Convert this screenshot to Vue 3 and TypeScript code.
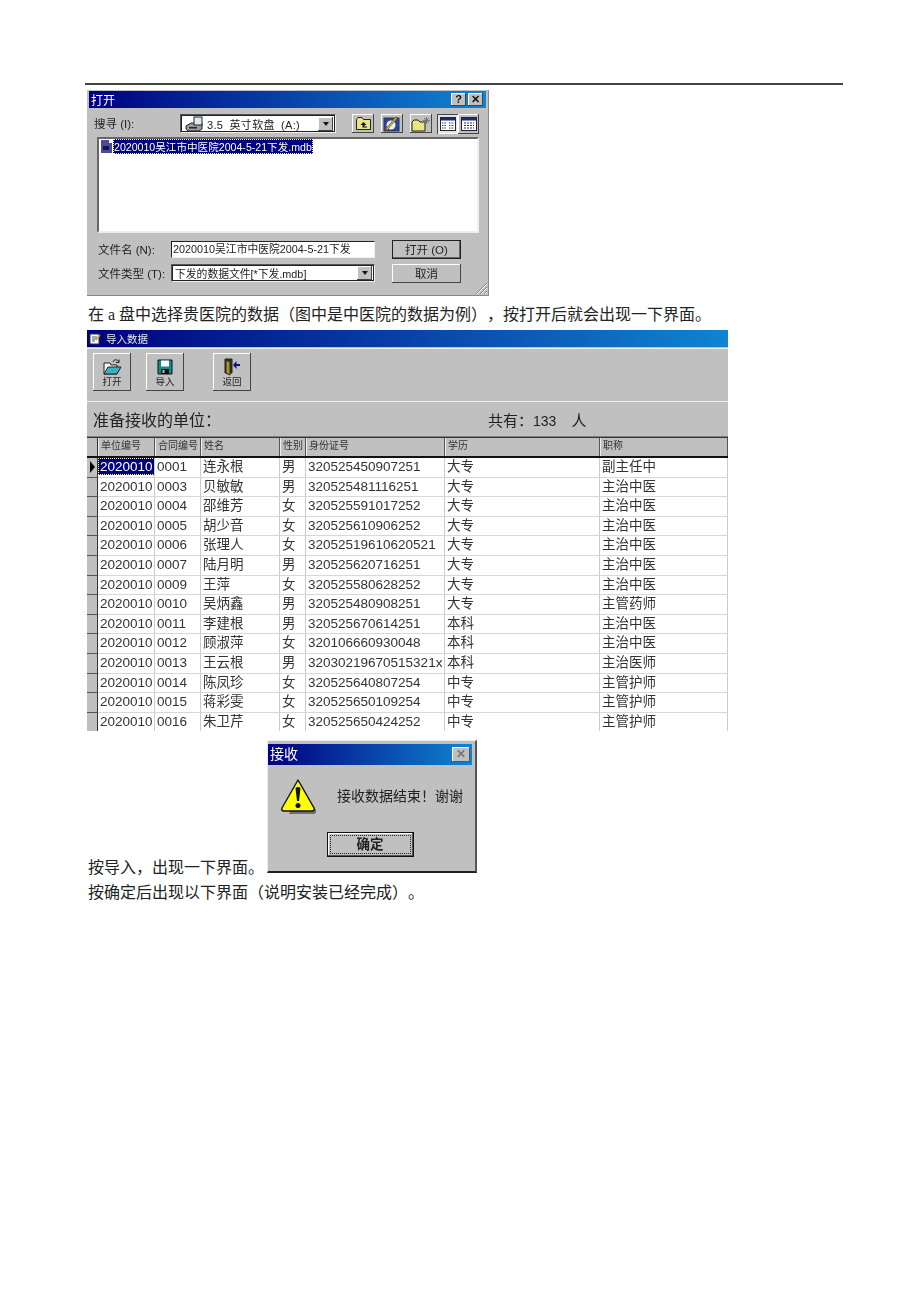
<script setup lang="ts">
interface Row {
  unit: string
  no: string
  name: string
  sex: string
  id: string
  edu: string
  title: string
}

const raw = [
  '0001 连永根 男 320525450907251 大专 副主任中',
  '0003 贝敏敏 男 320525481116251 大专 主治中医',
  '0004 邵维芳 女 320525591017252 大专 主治中医',
  '0005 胡少音 女 320525610906252 大专 主治中医',
  '0006 张理人 女 32052519610620521 大专 主治中医',
  '0007 陆月明 男 320525620716251 大专 主治中医',
  '0009 王萍 女 320525580628252 大专 主治中医',
  '0010 吴炳鑫 男 320525480908251 大专 主管药师',
  '0011 李建根 男 320525670614251 本科 主治中医',
  '0012 顾淑萍 女 320106660930048 本科 主治中医',
  '0013 王云根 男 32030219670515321x 本科 主治医师',
  '0014 陈凤珍 女 320525640807254 中专 主管护师',
  '0015 蒋彩雯 女 320525650109254 中专 主管护师',
  '0016 朱卫芹 女 320525650424252 中专 主管护师',
]

const rows: Row[] = raw.map((line) => {
  const [no, name, sex, id, edu, title] = line.split(' ')
  return { unit: '2020010', no, name, sex, id, edu, title }
})

const headers = ['单位编号', '合同编号', '姓名', '性别', '身份证号', '学历', '职称']
</script>

<template>
  <div class="page">
    <div class="rule"></div>

    <!-- open file dialog -->
    <div class="shot open-dlg">
      <div class="titlebar">
        <span class="title-text">打开</span>
        <span class="cap-btns">
          <span class="cap-btn">?</span>
          <span class="cap-btn">✕</span>
        </span>
      </div>
      <div class="look-row">
        <span class="look-label">搜寻 (I):</span>
        <div class="combo look-combo">
          <svg class="drive" width="20" height="16" viewBox="0 0 20 16">
            <path d="M1 10 L6 7 H17 V13 L14 15 H3 L1 13 Z" fill="#9a9a9a" stroke="#222" />
            <rect x="9" y="1" width="8" height="8" fill="#dfe6ee" stroke="#223" />
            <rect x="4" y="11" width="8" height="1.5" fill="#222" />
          </svg>
          <span class="combo-text spaced">3.5 英寸软盘 (A:)</span>
          <span class="arrow-btn"><i></i></span>
        </div>
        <div class="tool-group">
          <span class="tool">
            <svg width="15" height="13" viewBox="0 0 15 13">
              <path d="M0.500 2.500 L2 0.500 H6 L7.500 2.500 H14.500 V12.500 H0.500 Z" fill="#e8e67c" stroke="#222" />
              <path d="M7.500 5 L4.500 8 H6.500 V10.500 H11 V9.500 H8.500 V8 H10.500 Z" fill="#111" />
            </svg>
          </span>
          <span class="tool">
            <svg width="18" height="16" viewBox="0 0 18 16">
              <rect x="1" y="2" width="15" height="13" fill="#2846a8" stroke="#334" />
              <circle cx="8" cy="9" r="4.500" fill="#eef0f4" />
              <path d="M3 14 L8 8 L14 1" fill="none" stroke="#8a6a18" stroke-width="2.500" />
              <path d="M4 13 L13 2" fill="none" stroke="#e4d25a" stroke-width="1" />
            </svg>
          </span>
          <span class="tool">
            <svg width="20" height="16" viewBox="0 0 20 16">
              <path d="M1 6 L3 4 H7 L9 6 H14 V15 H1 Z" fill="#e8e67c" stroke="#222" />
              <path d="M15.500 1 V8 M12 4.500 H19 M13 2 L18 7 M18 2 L13 7" stroke="#666" stroke-width="0.800" />
            </svg>
          </span>
        </div>
        <div class="view-group">
          <span class="view-btn on">
            <svg width="16" height="14" viewBox="0 0 16 14">
              <rect x="0.500" y="0.500" width="15" height="13" fill="#fff" stroke="#223" />
              <rect x="1" y="1" width="14" height="2.500" fill="#1c2f70" />
              <path d="M2 6 H6 M2 8.500 H6 M2 11 H6 M9 6 H14 M9 8.500 H14 M9 11 H14" stroke="#1c2f70" stroke-width="1.200" stroke-dasharray="1 0.600" />
            </svg>
          </span>
          <span class="view-btn">
            <svg width="16" height="14" viewBox="0 0 16 14">
              <rect x="0.500" y="0.500" width="15" height="13" fill="#fff" stroke="#223" />
              <rect x="1" y="1" width="14" height="2.500" fill="#1c2f70" />
              <path d="M3 6 H13 M3 8.500 H13 M3 11 H13" stroke="#1c2f70" stroke-width="1" stroke-dasharray="2 1" />
            </svg>
          </span>
        </div>
      </div>
      <div class="file-list">
        <div class="file-item">
          <svg class="mdb" width="12" height="13" viewBox="0 0 12 13">
            <path d="M1 0 H9 L12 3 V13 H1 Z" fill="#4a4a96" />
            <path d="M9 0 L12 3 H9 Z" fill="#fff" />
            <rect x="3" y="6" width="6" height="4" fill="#141450" />
          </svg>
          <span class="file-name">2020010吴江市中医院2004-5-21下发.mdb</span>
        </div>
      </div>
      <div class="field-grid">
        <span class="field-label">文件名 (N):</span>
        <div class="field-input small">2020010吴江市中医院2004-5-21下发</div>
        <span class="btn default-btn">打开 (O)</span>
        <span class="field-label">文件类型 (T):</span>
        <div class="combo type-combo">
          <span class="combo-text small">下发的数据文件[*下发.mdb]</span>
          <span class="arrow-btn"><i></i></span>
        </div>
        <span class="btn">取消</span>
      </div>
      <svg class="grip" width="14" height="14" viewBox="0 0 14 14">
        <path d="M13 2 L2 13 M13 6 L6 13 M13 10 L10 13" stroke="#808080" />
        <path d="M13 3 L3 13 M13 7 L7 13 M13 11 L11 13" stroke="#fff" />
      </svg>
    </div>

    <p class="line first-line">在 a 盘中选择贵医院的数据（图中是中医院的数据为例），按打开后就会出现一下界面。</p>

    <!-- import window -->
    <div class="shot import-win">
      <div class="titlebar win-bar">
        <svg width="12" height="12" viewBox="0 0 12 12">
          <rect x="1" y="1" width="9" height="10" fill="#fff" stroke="#333" />
          <path d="M3 4 H8 M3 6 H8 M3 8 H6" stroke="#555" />
          <path d="M7 7 L11 2" stroke="#c9a227" stroke-width="1.500" />
        </svg>
        <span class="win-title">导入数据</span>
      </div>
      <div class="toolbar">
        <div class="big-btn">
          <svg width="20" height="18" viewBox="0 0 20 18">
            <path d="M2 5 H8 L9 7 H15 V16 H2 Z" fill="#f4f4f4" stroke="#222" />
            <path d="M2 16 L6 9 H19 L15 16 Z" fill="#35b4bd" stroke="#222" />
            <path d="M11 4 C12 1 15 1 17 4 M17 1.500 V4.500 H14" fill="none" stroke="#222" />
          </svg>
          <span>打开</span>
        </div>
        <div class="big-btn">
          <svg width="18" height="18" viewBox="0 0 18 18">
            <path d="M2 2 H16 V16 H2 Z" fill="#138a94" stroke="#111" />
            <rect x="5" y="2.500" width="8" height="6" fill="#fff" />
            <rect x="5" y="11" width="8" height="5" fill="#111" />
            <rect x="6.500" y="12" width="2" height="3" fill="#bbb" />
          </svg>
          <span>导入</span>
        </div>
        <div class="big-btn back-btn">
          <svg width="18" height="18" viewBox="0 0 18 18">
            <path d="M2 1 H9 V15 H2 Z" fill="#3c3410" stroke="#222" />
            <path d="M3 2 L7 4 V17 L3 15 Z" fill="#a89a1e" stroke="#222" />
            <path d="M17 6 H13.500 V3 L10 7 L13.500 11 V8 H17 Z" fill="#10108a" />
          </svg>
          <span>返回</span>
        </div>
      </div>
      <div class="summary">
        <span class="summary-label">准备接收的单位：</span>
        <span class="summary-count">共有：<b>133</b>人</span>
      </div>
      <div class="grid">
        <div class="grid-row head">
          <div class="marker"></div>
          <div v-for="h in headers" :key="h" class="cell">{{ h }}</div>
        </div>
        <div v-for="(r, i) in rows" :key="r.no" class="grid-row">
          <div class="marker"><i v-if="i === 0"></i></div>
          <div class="cell"><span :class="{ picked: i === 0 }">{{ r.unit }}</span></div>
          <div class="cell">{{ r.no }}</div>
          <div class="cell">{{ r.name }}</div>
          <div class="cell">{{ r.sex }}</div>
          <div class="cell">{{ r.id }}</div>
          <div class="cell">{{ r.edu }}</div>
          <div class="cell">{{ r.title }}</div>
        </div>
      </div>
    </div>

    <p class="line inline-line">
      按导入，出现一下界面。<span class="shot msg-dlg">
        <span class="titlebar msg-bar">
          <span class="msg-title">接收</span>
          <span class="msg-close">✕</span>
        </span>
        <span class="msg-body">
          <svg class="warn" width="36" height="38" viewBox="0 0 36 38">
            <path d="M20 6 L35 32 Q36 36 32 36 H8 Z" fill="#6f6f6f" />
            <path d="M17 2 L33 30 Q34 33 31 33 H3 Q0 33 1 30 Z" fill="#ffff00" stroke="#111" stroke-width="1.400" stroke-linejoin="round" />
            <path d="M14.500 10 Q17 8 19.500 10 L18 23 H16 Z" fill="#111" />
            <circle cx="17" cy="27.500" r="2.500" fill="#111" />
          </svg>
          <span class="msg-text">接收数据结束！谢谢</span>
        </span>
        <span class="msg-foot"><span class="ok-btn"><span>确定</span></span></span>
      </span>
    </p>
    <p class="line">按确定后出现以下界面（说明安装已经完成）。</p>
  </div>
</template>

<style>
html,
body {
  margin: 0;
  background: #fff;
}
</style>

<style scoped>
.page {
  width: 920px;
  height: 1302px;
  box-sizing: border-box;
  padding: 83px 77px 0 85px;
  font-family: "Liberation Serif", "Noto Sans CJK SC", serif;
  color: #222;
  overflow: hidden;
  text-spacing-trim: space-all;
}

.rule {
  height: 2px;
  background: #444;
}

.shot {
  background: #c0c0c0;
  font-family: "Liberation Sans", "Noto Sans CJK SC", sans-serif;
  color: #222;
  filter: blur(0.4px);
}

.titlebar {
  display: flex;
  align-items: center;
  background: linear-gradient(90deg, #000080, #1084d0);
  color: #fff;
}

/* open dialog */
.open-dlg {
  position: relative;
  width: 402px;
  height: 206px;
  margin: 5px 0 0 2px;
  padding: 1px 2px 0;
  box-sizing: border-box;
  font-size: 11.5px;
  border-right: 1px solid #888;
  border-bottom: 1px solid #888;
}

.open-dlg .titlebar {
  height: 17px;
  padding: 0 3px 0 2px;
  justify-content: space-between;
  font-size: 12px;
}

.cap-btns {
  display: flex;
  gap: 2px;
}

.cap-btn {
  width: 15px;
  height: 13px;
  background: #c0c0c0;
  color: #111;
  font: bold 11px/13px "Liberation Sans", sans-serif;
  text-align: center;
  box-shadow: inset -1px -1px #444, inset 1px 1px #fff;
}

.look-row {
  display: flex;
  align-items: center;
  height: 19px;
  margin-top: 6px;
  padding-left: 5px;
}

.look-label {
  width: 86px;
  flex: none;
  margin-top: -2px;
}

.combo {
  display: flex;
  align-items: center;
  background: #fff;
  box-sizing: border-box;
  border: 1px solid #555;
  border-right-color: #eee;
  border-bottom-color: #eee;
  outline: 1px solid #222;
  outline-offset: -2px;
}

.look-combo {
  width: 156px;
  height: 19px;
  padding: 0 2px 0 4px;
  flex: none;
}

.drive {
  flex: none;
}

.combo-text {
  flex: 1;
  padding-left: 2px;
  white-space: nowrap;
}

.spaced {
  font-size: 11px;
  word-spacing: 3px;
  letter-spacing: 0.3px;
}

.small {
  font-size: 10.8px;
}

.arrow-btn {
  width: 15px;
  height: 14px;
  flex: none;
  background: #c0c0c0;
  box-shadow: inset -1px -1px #444, inset 1px 1px #fff;
  display: flex;
  align-items: center;
  justify-content: center;
}

.arrow-btn i {
  border: 3px solid transparent;
  border-top: 4px solid #111;
  border-bottom: 0;
}

.tool-group {
  display: flex;
  gap: 7px;
  margin-left: 16px;
}

.tool {
  width: 22px;
  height: 19px;
  display: flex;
  align-items: center;
  justify-content: center;
  box-shadow: inset -1px -1px #444, inset 1px 1px #fff;
}

.view-group {
  display: flex;
  margin-left: 5px;
}

.view-btn {
  width: 21px;
  height: 20px;
  display: flex;
  align-items: center;
  justify-content: center;
  box-shadow: inset -1px -1px #444, inset 1px 1px #fff;
}

.view-btn.on {
  background: #e4e4e4;
  box-shadow: inset 1px 1px #444, inset -1px -1px #fff;
}

.file-list {
  height: 96px;
  margin: 4px 7px 0 8px;
  background: #fff;
  box-sizing: border-box;
  border: 2px solid #666;
  border-right-color: #eee;
  border-bottom-color: #eee;
}

.file-item {
  display: flex;
  align-items: center;
  height: 15px;
  padding-left: 1px;
}

.mdb {
  flex: none;
}

.file-name {
  margin-left: 1px;
  padding: 0 1px;
  background: #000080;
  color: #fff;
  outline: 1px dotted #ffe;
  outline-offset: -1px;
  white-space: nowrap;
  font-size: 10.6px;
}

.field-grid {
  display: grid;
  grid-template-columns: 73px 204px 69px;
  grid-template-rows: 18px 20px;
  row-gap: 5px;
  align-items: center;
  margin: 7px 0 0 9px;
}

.field-input {
  height: 17px;
  background: #fff;
  box-sizing: border-box;
  border: 1px solid #222;
  border-right-color: #eee;
  border-bottom-color: #eee;
  line-height: 15px;
  padding-left: 1px;
  white-space: nowrap;
}

.type-combo {
  height: 18px;
  padding: 0 2px 0 1px;
}

.btn {
  display: flex;
  height: 19px;
  margin-left: 17px;
  margin-right: -17px;
  align-items: center;
  justify-content: center;
  box-shadow: inset -1px -1px #444, inset 1px 1px #fff;
}

.default-btn {
  box-shadow: inset 0 0 0 1px #222, inset -2px -2px #666;
}

.grip {
  position: absolute;
  right: 0;
  bottom: 0;
}

.line {
  margin: 0;
  padding-left: 3px;
  font-size: 16px;
  line-height: 25px;
  white-space: nowrap;
}

.first-line {
  margin-top: 6px;
}

/* import window */
.import-win {
  width: 641px;
  height: 401px;
  margin: 3px 0 0 2px;
  overflow: hidden;
}

.win-bar {
  height: 17px;
  gap: 5px;
  padding-left: 2px;
}

.win-title {
  font-size: 10.5px;
  color: #e8e8e8;
}

.toolbar {
  display: flex;
  height: 53px;
  padding: 4px 0 0 6px;
  box-sizing: border-box;
  border-top: 1px solid #eee;
  margin-top: 1px;
}

.big-btn {
  width: 38px;
  height: 38px;
  margin-right: 15px;
  display: flex;
  flex-direction: column;
  align-items: center;
  justify-content: center;
  font-size: 9.5px;
  line-height: 11px;
  box-shadow: inset -1px -1px #444, inset 1px 1px #fff;
}

.back-btn {
  margin-left: 14px;
}

.summary {
  display: flex;
  align-items: center;
  height: 36px;
  box-sizing: border-box;
  border-top: 1px solid #eee;
  border-bottom: 1px solid #808080;
  padding-left: 6px;
  font-size: 16px;
}

.summary-label {
  width: 395px;
  flex: none;
}

.summary-count {
  font-size: 15px;
}

.summary-count b {
  font-weight: 400;
  font-size: 14px;
  margin-right: 15px;
}

.grid {
  border-top: 1px solid #333;
}

.grid-row {
  display: grid;
  grid-template-columns: 11px 57px 46px 79px 26px 139px 155px 128px;
  height: 19.6px;
  background: #fff;
  font-size: 13.5px;
  line-height: 17px;
  color: #333;
}

.cell {
  padding-left: 2px;
  border-right: 1px solid #ccc;
  border-bottom: 1px solid #d8d8d8;
  white-space: nowrap;
  overflow: hidden;
  box-sizing: border-box;
}

.marker {
  background: #c0c0c0;
  border-right: 1px solid #333;
  border-bottom: 1px solid #555;
  box-sizing: border-box;
  display: flex;
  align-items: center;
  justify-content: center;
}

.marker i {
  border: 6px solid transparent;
  border-left: 5px solid #000;
  border-right: 0;
}

.head {
  height: 18px;
  background: #c0c0c0;
  font-size: 10px;
  line-height: 15px;
  border-bottom: 2px solid #111;
}

.head .cell {
  border-right: 1px solid #555;
  border-left: 1px solid #eee;
  border-bottom: 0;
}

.head .marker {
  border-bottom: 0;
}

.picked {
  display: block;
  margin: 0 -1px 0 -2px;
  padding-left: 2px;
  background: #000080;
  color: #fff;
  outline: 1px dotted #ffe;
  outline-offset: -1px;
}

/* message box */
.inline-line {
  margin-top: 9px;
}

.msg-dlg {
  display: inline-block;
  vertical-align: baseline;
  overflow: hidden;
  width: 210px;
  height: 133px;
  margin-left: 3px;
  box-sizing: border-box;
  padding: 3px 3px 0 0;
  border-top: 1px solid #eee;
  border-left: 1px solid #eee;
  border-right: 2px solid #555;
  border-bottom: 2px solid #222;
  font-size: 14px;
}

.msg-bar {
  height: 21px;
  padding: 0 2px;
  justify-content: space-between;
  font-size: 14px;
}

.msg-close {
  width: 18px;
  height: 15px;
  background: #c0c0c0;
  color: #777;
  text-align: center;
  font: bold 12px/15px "Liberation Sans", sans-serif;
  box-shadow: inset -1px -1px #555, inset 1px 1px #fff;
}

.msg-body {
  display: flex;
  align-items: center;
  height: 62px;
  padding-left: 13px;
}

.warn {
  flex: none;
  margin-top: 2px;
}

.msg-text {
  margin-left: 20px;
  white-space: nowrap;
}

.msg-foot {
  display: flex;
  justify-content: center;
  padding: 5px 0 0 0;
}

.ok-btn {
  display: block;
  width: 87px;
  height: 25px;
  box-sizing: border-box;
  padding: 3px;
  background: #c0c0c0;
  box-shadow: inset 0 0 0 1px #111, inset -2px -2px #555, inset 2px 2px #fff;
}

.ok-btn span {
  display: block;
  height: 19px;
  line-height: 17px;
  box-sizing: border-box;
  text-align: center;
  border: 1px dotted #222;
  font-weight: 700;
  font-size: 13.5px;
}
</style>
